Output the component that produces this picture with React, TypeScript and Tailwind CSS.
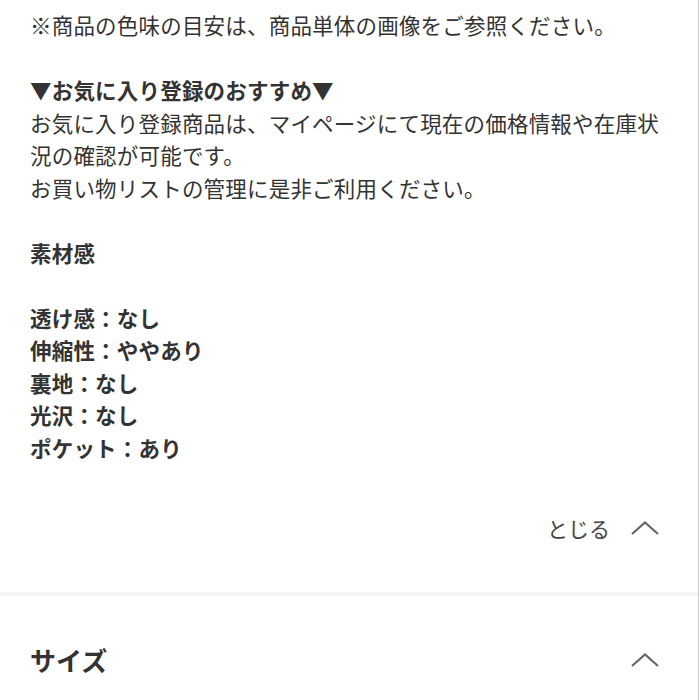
import React from "react";

const Chevron = () => (
  <svg width="28" height="14" viewBox="0 0 28 14" fill="none">
    <path d="M1 13 L14 1.5 L27 13" stroke="#666" strokeWidth="2.2" strokeLinejoin="miter" />
  </svg>
);

export default function App() {
  const font = "font-['Noto_Sans_CJK_JP','Noto_Sans',sans-serif]";
  return (
    <div className={`w-[700px] h-[700px] overflow-hidden bg-white ${font} text-[#333]`}>
      <div className="w-[699px] h-[700px] border-r border-[#c8c8c8] overflow-hidden">
        <div className="px-[30px] mt-[-23.5px] text-[21.5px] leading-[32.5px] tracking-[0.2px]">
          <p className="-translate-y-[5px]">サイズ：フリー</p>
          <p>※商品の色味の目安は、商品単体の画像をご参照ください。</p>
          <p>&nbsp;</p>
          <p className="font-bold">▼お気に入り登録のおすすめ▼</p>
          <p>お気に入り登録商品は、マイページにて現在の価格情報や在庫状</p>
          <p>況の確認が可能です。</p>
          <p>お買い物リストの管理に是非ご利用ください。</p>
          <p>&nbsp;</p>
          <p className="font-bold">素材感</p>
          <p>&nbsp;</p>
          <p className="font-bold">透け感：なし</p>
          <p className="font-bold">伸縮性：ややあり</p>
          <p className="font-bold">裏地：なし</p>
          <p className="font-bold">光沢：なし</p>
          <p className="font-bold">ポケット：あり</p>
        </div>
        <div className="h-[128px] flex items-center justify-end pr-[39px] gap-[21px]">
          <span className="text-[21px] text-[#444] leading-[30px]">とじる</span>
          <Chevron />
        </div>
        <div className="h-[4px] bg-[#f5f5f5]" />
        <div className="flex items-center justify-between pl-[30px] pr-[39px] pt-[46px]">
          <span className="text-[26px] font-bold leading-[36px] text-[#333]">サイズ</span>
          <Chevron />
        </div>
      </div>
    </div>
  );
}
